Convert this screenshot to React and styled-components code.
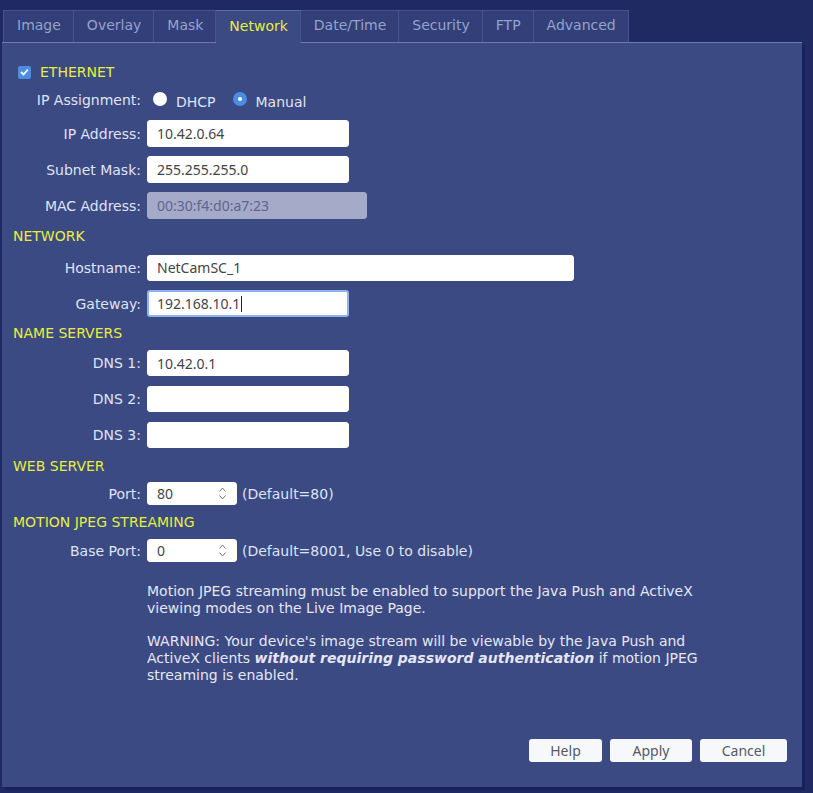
import React from 'react'
import styled, { createGlobalStyle } from 'styled-components'

const Global = createGlobalStyle`
  html, body {
    margin: 0;
    padding: 0;
    background: #1f2a62;
    font-family: "DejaVu Sans", sans-serif;
    font-size: 14px;
  }
`

const Page = styled.div`
  width: 813px;
  height: 793px;
  padding: 10px 0 0 2px;
  box-sizing: border-box;
  background: #1f2a62;
`

const TabBar = styled.div`
  display: flex;
  margin-left: 1px;
  position: relative;
  z-index: 2;
`

const Tab = styled.div`
  box-sizing: border-box;
  padding: 0 12px 3px 13px;
  display: flex;
  align-items: center;
  border: 1px solid #46538c;
  border-left-width: ${(p) => (p.$first ? 1 : 0)}px;
  border-bottom: none;
  background: ${(p) => (p.$active ? '#3c4a83' : '#323f78')};
  color: ${(p) => (p.$active ? '#e6f03c' : '#97a2cc')};
  border-top-color: ${(p) => (p.$active ? '#5d6aa3' : '#46538c')};
  height: ${(p) => (p.$active ? 33 : 32)}px;
  margin-bottom: ${(p) => (p.$active ? -1 : 0)}px;
`

const Panel = styled.div`
  width: 800px;
  height: 745px;
  box-sizing: border-box;
  background: #3c4a83;
  border-top: 1px solid #6c79b3;
  box-shadow: 3px 3px 0 #17215a;
  display: flex;
  flex-direction: column;
  padding: 19px 15px 0 1px;
  color: #dfe3f3;
`

const CheckRow = styled.div`
  display: flex;
  align-items: center;
  height: 20px;
  padding-left: 15px;
  gap: 9px;
`

const CheckBox = styled.div`
  width: 13px;
  height: 13px;
  border-radius: 2px;
  background: #4a8ee4;
  display: flex;
  align-items: center;
  justify-content: center;
`

const Heading = styled.div`
  color: #e6f03c;
  height: 17px;
  line-height: 17px;
  padding-left: 10px;
  margin-top: ${(p) => p.$top || 9}px;
`

const HeadText = styled.span`
  color: #e6f03c;
`

const Row = styled.div`
  display: grid;
  grid-template-columns: 138px auto;
  column-gap: 6px;
  align-items: center;
  margin-top: ${(p) => p.$top || 9}px;
  height: ${(p) => p.$h || 27}px;
`

const Label = styled.div`
  text-align: right;
  white-space: nowrap;
`

const Field = styled.div`
  width: ${(p) => p.$w || 202}px;
  height: ${(p) => p.$h || 27}px;
  box-sizing: border-box;
  border-radius: 3px;
  background: ${(p) => (p.$disabled ? '#a4aac8' : '#ffffff')};
  color: ${(p) => (p.$disabled ? '#5e6590' : '#444448')};
  border: ${(p) => (p.$focused ? '2px' : '1px')} solid;
  border-color: ${(p) => (p.$disabled ? '#a4aac8' : p.$focused ? '#8db2ee' : '#ffffff')};
  padding-left: ${(p) => (p.$focused ? 8 : 9)}px;
  display: flex;
  align-items: center;
  font-family: "Noto Sans", sans-serif;
  font-size: 14px;
  white-space: nowrap;
`

const Caret = styled.span`
  display: inline-block;
  width: 1px;
  height: 16px;
  background: #222;
  margin-left: 1px;
`

const Inline = styled.div`
  display: flex;
  align-items: center;
  gap: 5px;
`

const Spinner = styled(Field)`
  width: 90px;
  height: 23px;
  justify-content: space-between;
  padding-right: 10px;
`

const Arrows = styled.div`
  display: flex;
  flex-direction: column;
  gap: 3px;
`

const RadioGroup = styled.div`
  display: flex;
  align-items: center;
  padding-left: 6px;
`

const Radio = styled.div`
  width: 14px;
  height: 14px;
  border-radius: 50%;
  box-sizing: border-box;
  background: ${(p) => (p.$on ? '#4a8ee4' : '#ffffff')};
  display: flex;
  align-items: center;
  justify-content: center;
  margin-top: -3px;
  &::after {
    content: '';
    width: 4px;
    height: 4px;
    border-radius: 50%;
    background: ${(p) => (p.$on ? '#ffffff' : 'transparent')};
  }
`

const RadioText = styled.span`
  margin: 3px 17px 0 9px;
`

const Note = styled.div`
  margin-left: 144px;
  width: 560px;
  line-height: 17px;
  color: #e4e7f3;
  margin-top: ${(p) => p.$top}px;
`

const Strong = styled.span`
  font-weight: bold;
  font-style: italic;
`

const Buttons = styled.div`
  display: flex;
  justify-content: flex-end;
  gap: 8px;
  margin-top: auto;
  margin-bottom: 25px;
`

const Button = styled.button`
  width: ${(p) => p.$w}px;
  height: 23px;
  border: none;
  border-radius: 3px;
  background: #f7f8fc;
  color: #555a66;
  font-family: "Noto Sans", sans-serif;
  font-size: 14px;
  padding: 0;
`

const Up = () => (
  <svg width="7" height="5" viewBox="0 0 7 5">
    <path d="M0.5 4.5 L3.5 1 L6.5 4.5" fill="none" stroke="#777" strokeWidth="1" />
  </svg>
)
const Down = () => (
  <svg width="7" height="5" viewBox="0 0 7 5">
    <path d="M0.5 0.5 L3.5 4 L6.5 0.5" fill="none" stroke="#777" strokeWidth="1" />
  </svg>
)

const tabs = ['Image', 'Overlay', 'Mask', 'Network', 'Date/Time', 'Security', 'FTP', 'Advanced']

const PortSpinner = ({ value }) => (
  <Spinner>
    {value}
    <Arrows>
      <Up />
      <Down />
    </Arrows>
  </Spinner>
)

export default function App() {
  return (
    <Page>
      <Global />
      <TabBar>
        {tabs.map((name, i) => (
          <Tab key={name} $first={i === 0} $active={name === 'Network'}>
            {name}
          </Tab>
        ))}
      </TabBar>
      <Panel>
        <CheckRow>
          <CheckBox>
            <svg width="9" height="8" viewBox="0 0 9 8">
              <path d="M1 4 L3.5 6.5 L8 1.5" fill="none" stroke="#fff" strokeWidth="1.8" />
            </svg>
          </CheckBox>
          <HeadText>ETHERNET</HeadText>
        </CheckRow>

        <Row $top={8} $h={20}>
          <Label>IP Assignment:</Label>
          <RadioGroup>
            <Radio />
            <RadioText>DHCP</RadioText>
            <Radio $on />
            <RadioText>Manual</RadioText>
          </RadioGroup>
        </Row>

        <Row $top={10}>
          <Label>IP Address:</Label>
          <Field>10.42.0.64</Field>
        </Row>
        <Row>
          <Label>Subnet Mask:</Label>
          <Field>255.255.255.0</Field>
        </Row>
        <Row>
          <Label>MAC Address:</Label>
          <Field $w={220} $disabled>00:30:f4:d0:a7:23</Field>
        </Row>

        <Heading>NETWORK</Heading>
        <Row>
          <Label>Hostname:</Label>
          <Field $w={427} $h={26}>NetCamSC_1</Field>
        </Row>
        <Row>
          <Label>Gateway:</Label>
          <Field $focused>
            192.168.10.1
            <Caret />
          </Field>
        </Row>

        <Heading $top={8}>NAME SERVERS</Heading>
        <Row $h={26} $top={8}>
          <Label>DNS 1:</Label>
          <Field $h={26}>10.42.0.1</Field>
        </Row>
        <Row $h={26} $top={10}>
          <Label>DNS 2:</Label>
          <Field $h={26} />
        </Row>
        <Row $h={26} $top={10}>
          <Label>DNS 3:</Label>
          <Field $h={26} />
        </Row>

        <Heading $top={10}>WEB SERVER</Heading>
        <Row $h={23} $top={7}>
          <Label>Port:</Label>
          <Inline>
            <PortSpinner value="80" />
            <span>(Default=80)</span>
          </Inline>
        </Row>

        <Heading $top={9}>MOTION JPEG STREAMING</Heading>
        <Row $h={23} $top={8}>
          <Label>Base Port:</Label>
          <Inline>
            <PortSpinner value="0" />
            <span>(Default=8001, Use 0 to disable)</span>
          </Inline>
        </Row>

        <Note $top={21}>
          Motion JPEG streaming must be enabled to support the Java Push and ActiveX viewing modes on the
          Live Image Page.
        </Note>
        <Note $top={16}>
          WARNING: Your device's image stream will be viewable by the Java Push and ActiveX clients{' '}
          <Strong>without requiring password authentication</Strong> if motion JPEG streaming is enabled.
        </Note>

        <Buttons>
          <Button $w={73}>Help</Button>
          <Button $w={82}>Apply</Button>
          <Button $w={87}>Cancel</Button>
        </Buttons>
      </Panel>
    </Page>
  )
}
